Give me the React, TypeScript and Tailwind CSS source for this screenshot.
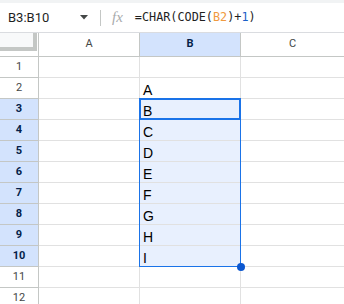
import React from "react";

// Spreadsheet view: formula bar + small grid with B3:B10 selected

const ROWS = [
  { n: 1, b: "" },
  { n: 2, b: "A" },
  { n: 3, b: "B" },
  { n: 4, b: "C" },
  { n: 5, b: "D" },
  { n: 6, b: "E" },
  { n: 7, b: "F" },
  { n: 8, b: "G" },
  { n: 9, b: "H" },
  { n: 10, b: "I" },
  { n: 11, b: "" },
  { n: 12, b: "" },
];

function FormulaBar() {
  return (
    <div className="flex h-[30px] items-center border-b border-[#dadce0] bg-white">
      <div className="w-[72px] pl-[8px] text-[13px] text-[#1f1f1f] font-['Roboto',sans-serif]">B3:B10</div>
      {/* dropdown caret */}
      <svg width="8" height="5" viewBox="0 0 8 5" className="ml-[8px]">
        <path d="M0 0h8L4 4.5z" fill="#444746" />
      </svg>
      <div className="ml-[12px] h-[16px] w-px bg-[#c4c7c5]" />
      <span className="ml-[11px] text-[15px] italic leading-none text-[#a8abad] font-['Liberation_Serif',serif]">fx</span>
      <span className="ml-[12px] text-[11.8px] text-[#1f1f1f] font-['DejaVu_Sans_Mono',monospace]">
        =CHAR(CODE(<span className="text-[#f09a3e]">B2</span>)+<span className="text-[#1a5fc8]">1</span>)
      </span>
    </div>
  );
}

function HeaderRow() {
  return (
    <div className="flex h-[24px] text-[11px] font-['Roboto',sans-serif]">
      {/* corner with freeze handles */}
      <div className="w-[39px] border-r border-b border-[#c4c7c5] bg-white">
        <div className="h-[18px] w-[37px] border-r-4 border-b-4 border-[#c4c7c5] bg-[#f8f9fa]" />
      </div>
      <div className="flex w-[101px] items-center justify-center border-r border-b border-[#c4c7c5] text-[#444746]">A</div>
      <div className="flex w-[101px] items-center justify-center border-r border-b border-[#c4c7c5] bg-[#d3e3fd] font-bold text-[#041e49]">B</div>
      <div className="flex flex-1 items-center justify-center border-b border-[#c4c7c5] text-[#444746]">C</div>
    </div>
  );
}

function Row({ n, b }: { n: number; b: string }) {
  const selected = n >= 3 && n <= 10;
  return (
    <div className="flex h-[21px]">
      <div
        className={
          selected
            ? "flex w-[39px] items-center justify-center border-r border-b border-[#c4c7c5] bg-[#d3e3fd] text-[11px] font-bold text-[#041e49] font-['Roboto',sans-serif]"
            : "flex w-[39px] items-center justify-center border-r border-b border-[#c4c7c5] bg-white text-[11px] text-[#444746] font-['Roboto',sans-serif]"
        }
      >
        {n}
      </div>
      <div className="w-[101px] border-r border-b border-[#e1e1e1]" />
      <div
        className={
          selected
            ? "flex w-[101px] items-end border-r border-b border-[#e1e1e1] bg-[#e8f0fe] pl-[3px] text-[14px] leading-[16px] text-[#000] font-['Liberation_Sans',sans-serif]"
            : "flex w-[101px] items-end border-r border-b border-[#e1e1e1] pl-[3px] text-[14px] leading-[16px] text-[#000] font-['Liberation_Sans',sans-serif]"
        }
      >
        {b}
      </div>
      <div className="flex-1 border-b border-[#e1e1e1]" />
    </div>
  );
}

export default function App() {
  return (
    <div className="relative h-[304px] w-[344px] overflow-hidden bg-white">
      <div className="h-[3px] bg-[#f1f3f4]" />
      <FormulaBar />
      <HeaderRow />
      {ROWS.map((r) => (
        <Row key={r.n} {...r} />
      ))}

      {/* selection overlays */}
      <div className="pointer-events-none absolute left-[139px] top-[98px] h-[169px] w-[102px] border border-[#1a73e8]" />
      <div className="pointer-events-none absolute left-[139px] top-[98px] h-[22px] w-[102px] border-2 border-[#1a73e8]" />
      <div className="absolute left-[237px] top-[263px] h-[8px] w-[8px] rounded-full bg-[#0b57d0]" />
    </div>
  );
}
